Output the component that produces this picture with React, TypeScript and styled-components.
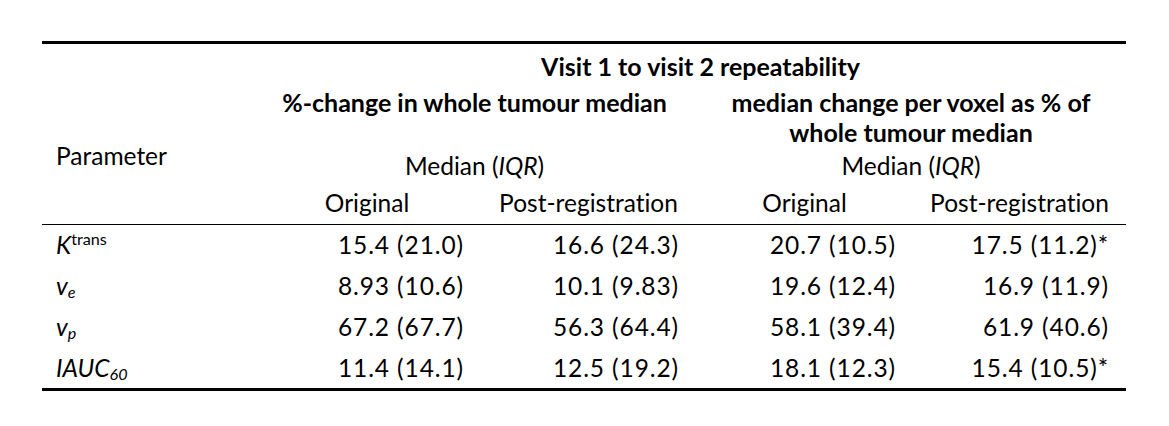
import styled, { createGlobalStyle } from 'styled-components';

const GlobalStyle = createGlobalStyle`
  html, body {
    margin: 0;
    padding: 0;
    background: #ffffff;
  }
`;

const Page = styled.div`
  padding: 41px 0 0 42px;
`;

const Table = styled.table`
  width: 1084px;
  table-layout: fixed;
  border-collapse: separate;
  border-spacing: 0;
  border-top: 3px solid #000;
  border-bottom: 3px solid #000;
  font-family: Lato, 'Liberation Sans', sans-serif;
  font-size: 24.5px;
  line-height: 30px;
  font-variant-ligatures: none;
  color: #000;

  tbody tr:first-child td {
    border-top: 1px solid #000;
  }
`;

const HeadCell = styled.th<{ $h?: number; $bold?: boolean; $shift?: number; $top?: boolean }>`
  height: ${(p) => p.$h ?? 36}px;
  padding: 0 0 0 ${(p) => p.$shift ?? 0}px;
  text-align: center;
  vertical-align: ${(p) => (p.$top ? 'top' : 'middle')};
  font-size: ${(p) => (p.$bold ? '25px' : 'inherit')};
  font-weight: ${(p) => (p.$bold ? 700 : 400)};
  white-space: nowrap;
`;

const LabelCell = styled.th`
  padding: 0 0 0 14px;
  text-align: left;
  vertical-align: middle;
  font-weight: 400;
`;

const NameCell = styled.td<{ $h: number }>`
  height: ${(p) => p.$h}px;
  padding: 0 0 0 14px;
  text-align: left;
  vertical-align: middle;
  white-space: nowrap;
`;

const ValueCell = styled.td<{ $h: number }>`
  height: ${(p) => p.$h}px;
  padding: 0 17px 0 0;
  text-align: right;
  vertical-align: middle;
  letter-spacing: 0.9px;
  white-space: nowrap;
`;

const Sup = styled.sup`
  font-size: 0.66em;
  font-style: normal;
  vertical-align: 0.55em;
  line-height: 0;
`;

const Sub = styled.sub`
  font-size: 0.66em;
  vertical-align: -0.18em;
  line-height: 0;
`;

type Row = {
  label: React.ReactNode;
  values: string[];
  height: number;
};

const rows: Row[] = [
  {
    label: (
      <>
        <i>K</i>
        <Sup>trans</Sup>
      </>
    ),
    values: ['15.4 (21.0)', '16.6 (24.3)', '20.7 (10.5)', '17.5 (11.2)*'],
    height: 40,
  },
  {
    label: (
      <i>
        v<Sub>e</Sub>
      </i>
    ),
    values: ['8.93 (10.6)', '10.1 (9.83)', '19.6 (12.4)', '16.9 (11.9)'],
    height: 42,
  },
  {
    label: (
      <i>
        v<Sub>p</Sub>
      </i>
    ),
    values: ['67.2 (67.7)', '56.3 (64.4)', '58.1 (39.4)', '61.9 (40.6)'],
    height: 40,
  },
  {
    label: (
      <i>
        IAUC<Sub>60</Sub>
      </i>
    ),
    values: ['11.4 (14.1)', '12.5 (19.2)', '18.1 (12.3)', '15.4 (10.5)*'],
    height: 41,
  },
];

const App: React.FC = () => {
  return (
    <Page>
      <GlobalStyle />
      <Table>
        <colgroup>
          <col style={{ width: 211 }} />
          <col style={{ width: 228 }} />
          <col style={{ width: 215 }} />
          <col style={{ width: 217 }} />
          <col style={{ width: 213 }} />
        </colgroup>
        <thead>
          <tr>
            <HeadCell $h={43} />
            <HeadCell $h={43} $bold $shift={22} colSpan={4}>
              Visit 1 to visit 2 repeatability
            </HeadCell>
          </tr>
          <tr>
            <LabelCell rowSpan={3}>Parameter</LabelCell>
            <HeadCell $h={63} $bold $top colSpan={2}>
              %-change in whole tumour median
            </HeadCell>
            <HeadCell $h={63} $bold $top colSpan={2}>
              median change per voxel as % of
              <br />
              whole tumour median
            </HeadCell>
          </tr>
          <tr>
            <HeadCell $h={32} colSpan={2}>
              Median (<i>IQR</i>)
            </HeadCell>
            <HeadCell $h={32} colSpan={2}>
              Median (<i>IQR</i>)
            </HeadCell>
          </tr>
          <tr>
            <HeadCell $h={42}>Original</HeadCell>
            <HeadCell $h={42}>Post-registration</HeadCell>
            <HeadCell $h={42}>Original</HeadCell>
            <HeadCell $h={42}>Post-registration</HeadCell>
          </tr>
        </thead>
        <tbody>
          {rows.map((row, i) => (
            <tr key={i}>
              <NameCell $h={row.height}>{row.label}</NameCell>
              {row.values.map((v, j) => (
                <ValueCell key={j} $h={row.height}>
                  {v}
                </ValueCell>
              ))}
            </tr>
          ))}
        </tbody>
      </Table>
    </Page>
  );
};
export default App;
